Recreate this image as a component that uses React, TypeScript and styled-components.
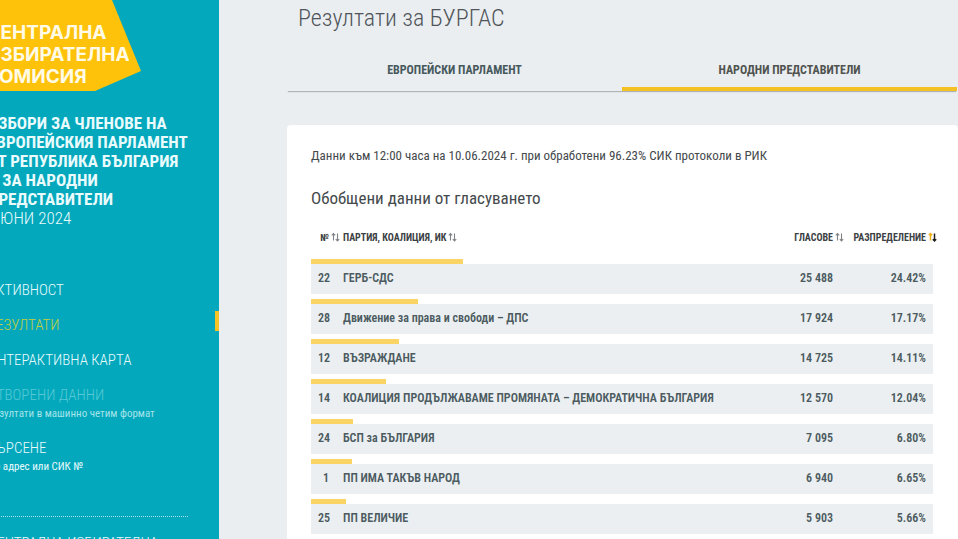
import React from "react";
import styled, { createGlobalStyle } from "styled-components";

const GlobalStyle = createGlobalStyle`
  *, *::before, *::after { box-sizing: border-box; }
  body {
    margin: 0;
    overflow: hidden;
    background: #eaeef1;
    color: #44494c;
    font-family: "Roboto Condensed", "Liberation Sans Narrow", Roboto, sans-serif;
  }
  h1, h2, p, ul { margin: 0; padding: 0; }
`;

const Page = styled.div`
  display: flex;
  height: 100vh;
  overflow: hidden;
`;

const Sidebar = styled.aside`
  flex: 0 0 251px;
  margin-left: -32px;
  background: #03a8bc;
  color: #e9fbfd;
  overflow: hidden;
`;

const Brand = styled.a`
  display: grid;
  width: 174px;
  height: 91px;
  text-decoration: none;
  > * { grid-area: 1 / 1; }
`;

const BrandShape = styled.svg`
  display: block;
  width: 174px;
  height: 91px;
`;

const BrandName = styled.span`
  padding: 22px 0 0 18px;
  color: #fffbe6;
  font: 700 19px/22px Inter, sans-serif;
  white-space: nowrap;
`;

const SideBody = styled.div`
  padding: 23px 31px 0 20px;
`;

const ElectionTitle = styled.p`
  font-size: 17px;
  line-height: 19px;
  white-space: nowrap;
  font-weight: 300;
`;

const Strong = styled.strong`
  display: block;
  font-weight: 700;
`;

const Nav = styled.ul`
  list-style: none;
  margin: 52px -31px 0 0;
  display: grid;
  gap: 15px;
`;

const NavLink = styled.a<{ $active?: boolean; $muted?: boolean }>`
  display: block;
  position: relative;
  color: ${(p) => (p.$active ? "#c3cf3c" : p.$muted ? "#57c8d5" : "#e9fbfd")};
  font-size: 15px;
  line-height: 20px;
  font-weight: 300;
  text-decoration: none;
  white-space: nowrap;

  &::after {
    content: "";
    display: ${(p) => (p.$active ? "block" : "none")};
    position: absolute;
    top: -4px;
    right: 0;
    width: 4px;
    height: 20px;
    background: #f7c325;
  }
`;

const NavNote = styled.small<{ $muted?: boolean }>`
  display: block;
  font-size: 11px;
  line-height: 18px;
  font-weight: 400;
  color: ${(p) => (p.$muted ? "#a5e3ea" : "#e9fbfd")};
`;

const SideFooter = styled.div`
  margin-top: 40px;
  padding-top: 16px;
  border-top: 1px dotted #a8e2e9;
  font-size: 15px;
  line-height: 20px;
  font-weight: 300;
  white-space: nowrap;
`;

const Main = styled.main`
  flex: 1;
  min-width: 0;
  padding-left: 68px;
`;

const PageTitle = styled.h1`
  padding: 4px 0 0 11px;
  font-size: 24px;
  line-height: 28px;
  font-weight: 300;
  color: #50555a;
`;

const Tabs = styled.nav`
  display: grid;
  grid-template-columns: 1fr 1fr;
  margin: 16px 1px 0 0;
  box-shadow: 0 2px 1px -1px #b0b4b7;
`;

const Tab = styled.button<{ $active?: boolean }>`
  height: 43px;
  padding: 4px 0 0;
  border: 0;
  border-bottom: 4px solid ${(p) => (p.$active ? "#f5c023" : "transparent")};
  background: #eaeef1;
  color: ${(p) => (p.$active ? "#50534f" : "#47595c")};
  font: inherit;
  font-size: 12px;
  line-height: 16px;
  font-weight: 700;
`;

const Card = styled.section`
  min-height: 430px;
  margin-top: 34px;
  padding: 21px 25px 0 24px;
  border-radius: 4px;
  background: #fff;
`;

const Status = styled.p`
  font-size: 13px;
  line-height: 20px;
`;

const SectionTitle = styled.h2`
  margin-top: 20px;
  font-size: 17px;
  line-height: 24px;
  font-weight: 400;
`;

const ResultsTable = styled.table`
  width: 100%;
  margin-top: 16px;
  border-collapse: collapse;
  table-layout: fixed;
  font-weight: 600;
`;

const Col = styled.col<{ $w?: number }>`
  width: ${(p) => (p.$w ? `${p.$w}px` : "auto")};
`;

const HeadCell = styled.th<{ $right?: boolean }>`
  height: 20px;
  padding: 0 7px;
  text-align: ${(p) => (p.$right ? "right" : "left")};
`;

const SortButton = styled.button`
  display: inline-flex;
  align-items: center;
  gap: 2px;
  margin-right: -11px;
  padding: 0;
  border: 0;
  background: none;
  color: #3c4144;
  font: inherit;
  font-size: 10px;
  line-height: 16px;
  white-space: nowrap;
`;

const BarCell = styled.td<{ $first?: boolean }>`
  height: ${(p) => (p.$first ? 18 : 10)}px;
  padding: 0;
  vertical-align: bottom;
`;

const Bar = styled.div`
  height: 5px;
  background: #fad565;
`;

const Cell = styled.td<{ $right?: boolean }>`
  height: 30px;
  padding: 0 7px 2px;
  background: #ebeff2;
  color: #4b5b60;
  font-size: 12px;
  line-height: 16px;
  text-align: ${(p) => (p.$right ? "right" : "left")};
  white-space: nowrap;
`;

function SortIcon({ active }: { active?: boolean }) {
  return (
    <svg width="9" height="12" viewBox="0 0 9 12" fill="none" aria-hidden="true">
      <path d="M2.5 8.5V1.5M.8 3.3l1.7-1.8 1.7 1.8" stroke={active ? "#f0ae18" : "#808385"} strokeWidth={active ? 1.5 : 1.1} />
      <path d="M6.5 1.5v7.5M4.8 7.2l1.7 1.8 1.7-1.8" stroke={active ? "#1e1e1e" : "#808385"} strokeWidth={active ? 1.5 : 1.1} />
    </svg>
  );
}

const results = [
  { no: 22, name: "ГЕРБ-СДС", votes: "25 488", share: "24.42%" },
  { no: 28, name: "Движение за права и свободи – ДПС", votes: "17 924", share: "17.17%" },
  { no: 12, name: "ВЪЗРАЖДАНЕ", votes: "14 725", share: "14.11%" },
  { no: 14, name: "КОАЛИЦИЯ ПРОДЪЛЖАВАМЕ ПРОМЯНАТА – ДЕМОКРАТИЧНА БЪЛГАРИЯ", votes: "12 570", share: "12.04%" },
  { no: 24, name: "БСП за БЪЛГАРИЯ", votes: "7 095", share: "6.80%" },
  { no: 1, name: "ПП ИМА ТАКЪВ НАРОД", votes: "6 940", share: "6.65%" },
  { no: 25, name: "ПП ВЕЛИЧИЕ", votes: "5 903", share: "5.66%" },
];

export default function App() {
  return (
    <Page>
      <GlobalStyle />
      <Sidebar>
        <Brand href="#home">
          <BrandShape viewBox="0 0 174 91" aria-hidden="true">
            <path d="M0 0H144L173 71L127 91H0Z" fill="#ffc20a" />
          </BrandShape>
          <BrandName lang="bg">
            ЦЕНТРАЛНА<br />ИЗБИРАТЕЛНА<br />КОМИСИЯ
          </BrandName>
        </Brand>
        <SideBody>
          <ElectionTitle>
            <Strong>
              ИЗБОРИ ЗА ЧЛЕНОВЕ НА<br />ЕВРОПЕЙСКИЯ ПАРЛАМЕНТ<br />ОТ РЕПУБЛИКА БЪЛГАРИЯ<br />И ЗА НАРОДНИ<br />ПРЕДСТАВИТЕЛИ
            </Strong>
            9 ЮНИ 2024
          </ElectionTitle>
          <Nav>
            <li><NavLink href="#activity">АКТИВНОСТ</NavLink></li>
            <li><NavLink href="#results" $active>РЕЗУЛТАТИ</NavLink></li>
            <li><NavLink href="#map">ИНТЕРАКТИВНА КАРТА</NavLink></li>
            <li>
              <NavLink href="#data" $muted>
                ОТВОРЕНИ ДАННИ
                <NavNote $muted>Резултати в машинно четим формат</NavNote>
              </NavLink>
            </li>
            <li>
              <NavLink href="#search">
                ТЪРСЕНЕ
                <NavNote>По адрес или СИК №</NavNote>
              </NavLink>
            </li>
          </Nav>
          <SideFooter>ЦЕНТРАЛНА ИЗБИРАТЕЛНА</SideFooter>
        </SideBody>
      </Sidebar>
      <Main>
        <PageTitle>Резултати за БУРГАС</PageTitle>
        <Tabs>
          <Tab type="button">ЕВРОПЕЙСКИ ПАРЛАМЕНТ</Tab>
          <Tab type="button" $active>НАРОДНИ ПРЕДСТАВИТЕЛИ</Tab>
        </Tabs>
        <Card>
          <Status>Данни към 12:00 часа на 10.06.2024 г. при обработени 96.23% СИК протоколи в РИК</Status>
          <SectionTitle>Обобщени данни от гласуването</SectionTitle>
          <ResultsTable>
            <colgroup>
              <Col $w={25} />
              <Col />
              <Col $w={70} />
              <Col $w={93} />
            </colgroup>
            <thead>
              <tr>
                <HeadCell $right><SortButton type="button">№<SortIcon /></SortButton></HeadCell>
                <HeadCell><SortButton type="button">ПАРТИЯ, КОАЛИЦИЯ, ИК<SortIcon /></SortButton></HeadCell>
                <HeadCell $right><SortButton type="button">ГЛАСОВЕ<SortIcon /></SortButton></HeadCell>
                <HeadCell $right><SortButton type="button">РАЗПРЕДЕЛЕНИЕ<SortIcon active /></SortButton></HeadCell>
              </tr>
            </thead>
            <tbody>
              {results.map((r, i) => (
                <React.Fragment key={r.no}>
                  <tr>
                    <BarCell colSpan={4} $first={i === 0}><Bar style={{ width: r.share }} /></BarCell>
                  </tr>
                  <tr>
                    <Cell $right>{r.no}</Cell>
                    <Cell>{r.name}</Cell>
                    <Cell $right>{r.votes}</Cell>
                    <Cell $right>{r.share}</Cell>
                  </tr>
                </React.Fragment>
              ))}
            </tbody>
          </ResultsTable>
        </Card>
      </Main>
    </Page>
  );
}
